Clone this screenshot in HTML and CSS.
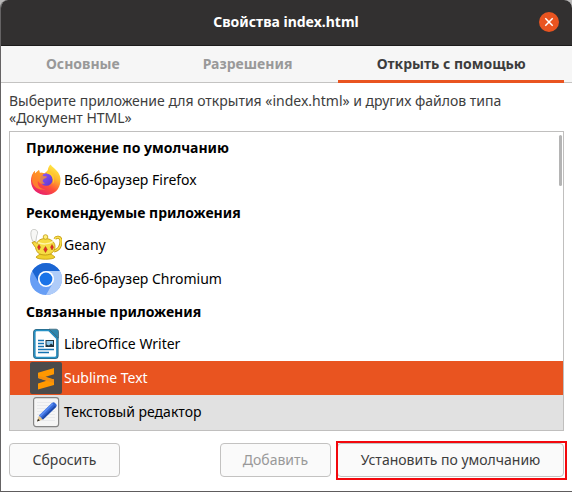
FILE: index.html
```html
<!DOCTYPE html>
<html lang="ru">
<head>
<meta charset="utf-8">
<meta name="viewport" content="width=device-width, initial-scale=1">
<title>Свойства index.html</title>
<link rel="stylesheet" href="styles.css">
</head>
<body>
<div class="window">
  <header class="titlebar">
    <h1 class="title">Свойства index.html</h1>
    <button class="close" type="button" aria-label="Закрыть">
      <svg viewBox="0 0 20 20" width="20" height="20"><circle cx="10" cy="10" r="10" fill="#e95420"/><path d="M6.300 6.300l7.400 7.400M13.700 6.300l-7.400 7.400" stroke="#fff" stroke-width="1.500"/></svg>
    </button>
  </header>
  <nav class="tabs" role="tablist">
    <button class="tab" type="button" role="tab">Основные</button>
    <button class="tab" type="button" role="tab">Разрешения</button>
    <button class="tab active" type="button" role="tab" aria-selected="true">Открыть с помощью</button>
  </nav>
  <main class="content">
    <p class="hint">Выберите приложение для открытия «index.html» и других файлов типа «Документ HTML»</p>
    <div class="list">
      <h2 class="group">Приложение по умолчанию</h2>
      <div class="row">
        <svg class="icon" viewBox="0 0 32 32">
          <defs>
            <linearGradient id="fox" x1=".8" y1="0" x2=".25" y2="1"><stop offset="0" stop-color="#fff14a"/><stop offset=".35" stop-color="#ffb52b"/><stop offset=".65" stop-color="#ff5138"/><stop offset="1" stop-color="#e51a75"/></linearGradient>
            <linearGradient id="globe" x1="0" y1="0" x2="1" y2="1"><stop offset="0" stop-color="#9059ff"/><stop offset="1" stop-color="#5b36c8"/></linearGradient>
          </defs>
          <path d="M20.500 .5c1.800 2.500 4 3.500 5.500 5.500 3.500 3 4.800 7 4.500 11C30 25.500 24 31 16 31S1 25.500 1 17c0-4 1.200-7.500 3.700-10.200L5 9.500l4-3.500.8 3c1.700-.4 3.500-.3 4.700.3L17.800 6.500c.2-2.500 1-4.500 2.700-6z" fill="url(#fox)"/>
          <circle cx="16.300" cy="15.500" r="6.300" fill="url(#globe)"/>
          <path d="M17 6.500c4.500 1 7 4.500 7 9 0 2-.5 3.500-1.300 4.700 1.500-6-1.700-10-5.700-10.700z" fill="#ffcc2c"/>
          <path d="M4.700 6.800L5 9.500l4-3.500.8 3c1.700-.4 3.500-.3 4.700.3-1.500.7-1.800 1.700-1.500 2.700l4 .5c0 1.500-3 2-3.800 3-1 1.500-.2 3 1.800 3.700-3 1.500-6 .2-7-2.500-1.300 5 3 9 8 8.500C8 27 2 22.500 2 15.500c0-3.500 1-6.500 2.700-8.700z" fill="#ff9426" opacity=".75"/>
        </svg>
        <span class="name">Веб-браузер Firefox</span>
      </div>
      <h2 class="group">Рекомендуемые приложения</h2>
      <div class="row">
        <svg class="icon" viewBox="0 0 32 32">
          <path d="M2.500 12C1 8 .2 4 1.500 1.500 3.500-.5 7 .5 7.500 3 8 5 6.500 6 6.500 8l-.7 5z" fill="#f7f7f5" stroke="#bfc0bd" stroke-width=".8"/>
          <path d="M25 10c1-2.700 6-2.500 6 2 0 5-2.500 9-7 10" fill="none" stroke="#c69b0c" stroke-width="3"/>
          <path d="M25 10c1-2.700 6-2.500 6 2 0 5-2.500 9-7 10" fill="none" stroke="#f7df50" stroke-width="1.500"/>
          <path d="M10 25h11l4 3c0 3-19 3-19 0z" fill="#efd02c" stroke="#c29a10" stroke-width=".8"/>
          <path d="M2 13.500l3-1 2 2c.5-3 4-5 8.500-5s9.500 3 9.500 8c0 5-4 8.500-9.500 8.500-7 0-9-3-10-7.500z" fill="#f6dc43" stroke="#c39b12" stroke-width=".9"/>
          <circle cx="15.500" cy="8" r="2.300" fill="#fff07c" stroke="#c39b12" stroke-width=".8"/>
          <path d="M8 13.500c4 2 11 2 15-1" fill="none" stroke="#fff5a5" stroke-width="1.500"/>
          <path d="M9 15.500l1.500 2.700L9 21l-1.500-2.800zM15.500 17.500l1.800 3-1.800 3-1.800-3zM22 15.500l1.500 2.700L22 21l-1.500-2.800z" fill="#e52b2b" stroke="#a8381c" stroke-width=".5"/>
        </svg>
        <span class="name">Geany</span>
      </div>
      <div class="row">
        <svg class="icon" viewBox="0 0 32 32">
          <circle cx="16" cy="16" r="16" fill="#679ef5"/>
          <path d="M16 8h13.860A16 16 0 0 1 16 32l6.930-12z" fill="#afccf9"/>
          <path d="M16 8h13.860A16 16 0 0 0 2.200 8l6.870 12A8 8 0 0 1 16 8z" fill="#1b65d2"/>
          <circle cx="16" cy="16" r="8" fill="#fff"/>
          <circle cx="16" cy="16" r="6.400" fill="#1a73e8"/>
        </svg>
        <span class="name">Веб-браузер Chromium</span>
      </div>
      <h2 class="group">Связанные приложения</h2>
      <div class="row">
        <svg class="icon" viewBox="0 0 32 32">
          <path d="M6.500 2H19l8.500 8.500V27.500c0 1.500-1 2.500-2.500 2.500H6.500C5 30 4.200 29 4.200 27.500V4.300C4.200 3 5.200 2 6.500 2z" fill="#fff" stroke="#2a6482" stroke-width="2.200"/>
          <path d="M6.500 2.500H19l8 8V27.500c0 1.200-.8 2-2 2H6.500c-1.200 0-1.800-.8-1.800-2V4.300c0-1 .8-1.800 1.800-1.800z" fill="none" stroke="#2792c6" stroke-width="1.400"/>
          <path d="M19 1.200h7c1.500 0 2.500 1 2.500 2.500V10z" fill="#2f87ae" stroke="#3c6679" stroke-width=".8"/>
          <path d="M8 12.500h6M8 15.500h6M8 18.500h6M8 21.500h16M8 24.500h11" stroke="#1473b2" stroke-width="1.500"/>
          <path d="M15.500 12h8.500v7h-8.500z" fill="#20343e"/><path d="M16.500 13h6.500v4l-2-1.500-2 2-2.500-1z" fill="#8cc8ed"/>
        </svg>
        <span class="name">LibreOffice Writer</span>
      </div>
      <div class="row selected">
        <svg class="icon" viewBox="0 0 32 32">
          <rect width="32" height="32" rx="2" fill="#4b4b4b"/>
          <path d="M24 6v6.200l-8.500 2.600L24 17.500v5.400L8 27.500v-6l8.500-2.700L8 16v-5.200z" fill="#ff9800"/>
          <path d="M8 16v-2l16 3.500v3.500l-7.500-2.200z" fill="#f28d10"/>
        </svg>
        <span class="name">Sublime Text</span>
      </div>
      <div class="row hovered">
        <svg class="icon" viewBox="0 0 32 32">
          <rect x="3.600" y="1.600" width="25" height="29" rx="2.500" fill="#f5f5f5" stroke="#858585" stroke-width="1.200"/>
          <path d="M7 6.500h18M7 9.500h18M7 12.500h18M7 15.500h18M7 18.500h18M7 21.500h18M7 24.500h18" stroke="#e5e6e8" stroke-width=".8"/>
          <path d="M7 25.500l2-6 4 4z" fill="#e4c58c"/><path d="M7 25.500l1-2.700 1.800 1.800z" fill="#222"/>
          <path d="M9 19.500L22 7c1-1 2-1 3 0l1 1c1 1 1 2 0 3L13 23.500z" fill="#3367d6"/>
          <path d="M9 19.500L22 7l1.500 1.300-13 12.700z" fill="#5a8bf0"/>
          <path d="M11.500 22.200L25 9.500l1 1.500L13 23.500z" fill="#204aa8"/>
        </svg>
        <span class="name">Текстовый редактор</span>
      </div>
      <div class="thumb"></div>
    </div>
    <div class="actions">
      <button class="button" type="button">Сбросить</button>
      <button class="button add" type="button" disabled>Добавить</button>
      <button class="button marked" type="button">Установить по умолчанию</button>
    </div>
  </main>
</div>
</body>
</html>
```
FILE: styles.css
```css
* {
  box-sizing: border-box;
}

body {
  margin: 0;
  background: #b9b8b8;
  color: #3d3d3d;
  font: 14px/17px "Noto Sans", sans-serif;
}

button {
  font: inherit;
  color: inherit;
}

.window {
  display: flex;
  flex-direction: column;
  min-height: 100vh;
  overflow: hidden;
  border-left: 1px solid #656364;
  border-bottom: 1px solid #5e5c5d;
  border-radius: 8px 8px 0 0;
  background: #fff;
}

.titlebar {
  display: grid;
  grid-template-columns: 20px 1fr 20px;
  align-items: center;
  height: 46px;
  padding: 0 13px 2px 12px;
  border-bottom: 1px solid #1c1b1b;
  background: #323030;
}

.title {
  grid-column: 2;
  margin: 0;
  color: #fff;
  font-size: 14px;
  text-align: center;
}

.close {
  display: block;
  width: 20px;
  height: 20px;
  padding: 0;
  border: 0;
  background: none;
}

.close svg {
  display: block;
}

.tabs {
  display: grid;
  grid-template-columns: 148fr 164fr 226fr;
  gap: 9px;
  height: 37px;
  padding: 0 8px;
  background: #f6f6f6;
  box-shadow: inset 0 -1px #c4c3c2;
}

.tab {
  padding: 0;
  border: 0;
  border-bottom: 3px solid transparent;
  background: none;
  color: #999;
  font-weight: bold;
  white-space: nowrap;
}

.tab.active {
  border-bottom-color: #e95420;
  color: #3d3d3d;
}

.content {
  display: flex;
  flex: 1;
  flex-direction: column;
  padding: 9px 8px 14px;
}

.hint {
  margin: 0 0 5px;
}

.list {
  position: relative;
  flex: 1;
  border: 1px solid #c0bfbe;
  background: #fff;
  color: #000;
}

.group {
  height: 31px;
  margin: 0;
  padding-left: 16px;
  font-size: 14px;
  line-height: 31px;
}

.row {
  display: flex;
  align-items: center;
  gap: 2px;
  height: 34px;
  padding-left: 20px;
}

.name {
  padding-bottom: 2px;
}

.icon {
  width: 32px;
  height: 32px;
}

.row.selected {
  background: #e95420;
  color: #fff;
}

.row.hovered {
  height: 35px;
  padding-bottom: 1px;
  background: #e1e1e1;
}

.thumb {
  position: absolute;
  top: 3px;
  right: 1px;
  width: 3px;
  height: 51px;
  border-radius: 2px;
  background: #b4b4b4;
}

.actions {
  display: flex;
  gap: 6px;
  margin-top: 12px;
}

.button {
  height: 34px;
  min-width: 111px;
  padding: 0 20px 2px;
  border: 1px solid #c3c2c1;
  border-radius: 4px;
  background: #fafafa;
  white-space: nowrap;
}

.button.add {
  margin-left: auto;
  color: #999;
}

.button.marked {
  position: relative;
  min-width: 227px;
}

.button.marked::after {
  position: absolute;
  inset: -3px -4px -4px -2px;
  border: 2px solid #f3080d;
  content: "";
}
```
